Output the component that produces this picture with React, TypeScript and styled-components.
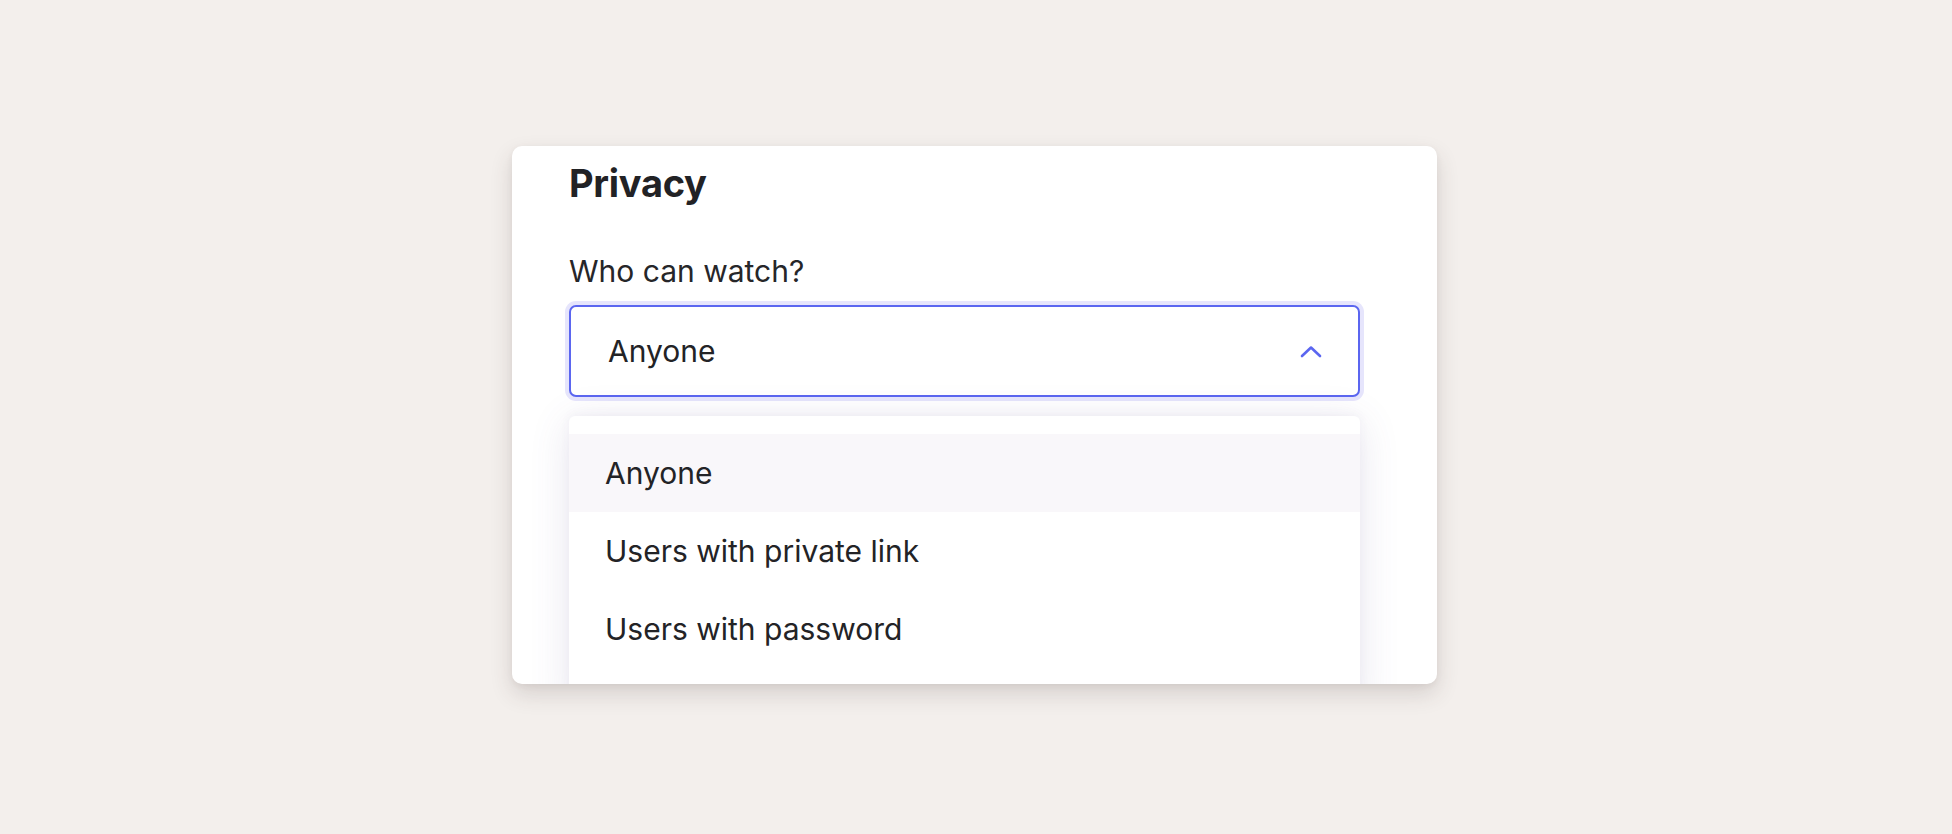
import React from "react";
import styled, { createGlobalStyle } from "styled-components";

const Global = createGlobalStyle`
  html, body { margin: 0; padding: 0; }
  body {
    background: #f3efec;
    font-family: Inter, Roboto, "Liberation Sans", sans-serif;
    color: #232326;
  }
`;

const Page = styled.div`
  box-sizing: border-box;
  width: 100vw;
  height: 100vh;
  padding: 0 3px 4px 0;
  display: flex;
  align-items: center;
  justify-content: center;
`;

const Card = styled.div`
  box-sizing: border-box;
  width: 925px;
  height: 538px;
  background: #ffffff;
  border-radius: 10px;
  box-shadow: 0 10px 22px rgba(70, 50, 50, 0.16), 0 2px 6px rgba(70, 50, 50, 0.06);
  overflow: hidden;
  padding: 13px 77px 0 57px;
  display: flex;
  flex-direction: column;
`;

const Title = styled.h2`
  margin: 0;
  font-size: 38px;
  line-height: 48px;
  font-weight: 700;
  letter-spacing: -0.3px;
  color: #222225;
`;

const Label = styled.label`
  margin-top: 46px;
  font-size: 30px;
  line-height: 36px;
  font-weight: 400;
  color: #262629;
`;

const SelectWrap = styled.div`
  position: relative;
  margin-top: 16px;
`;

const Trigger = styled.div`
  box-sizing: border-box;
  height: 92px;
  border: 2px solid #5b66f0;
  border-radius: 7px;
  box-shadow: 0 0 0 4px #e6e5fc;
  background: #ffffff;
  display: flex;
  align-items: center;
  justify-content: space-between;
  padding: 0 36px 0 37px;
  font-size: 30px;
  color: #232326;
`;

const Menu = styled.ul`
  position: absolute;
  left: 0;
  right: 0;
  top: calc(100% + 19px);
  margin: 0;
  padding: 18px 0 40px;
  list-style: none;
  background: #ffffff;
  border-radius: 6px;
  box-shadow: 0 6px 40px rgba(90, 80, 140, 0.14), 0 -2px 10px rgba(90, 80, 140, 0.05);
`;

const Item = styled.li<{ $active?: boolean }>`
  height: 78px;
  display: flex;
  align-items: center;
  padding: 0 36px;
  font-size: 30px;
  color: #232326;
  background: ${(p) => (p.$active ? "#f9f7fa" : "transparent")};
`;

const Chevron = () => (
  <svg width="22" height="13" viewBox="0 0 22 13" fill="none">
    <path
      d="M2 11 L11 2.5 L20 11"
      stroke="#5b66f0"
      strokeWidth="2.6"
      strokeLinecap="round"
      strokeLinejoin="round"
    />
  </svg>
);

export default function App() {
  const options = ["Anyone", "Users with private link", "Users with password"];
  return (
    <Page>
      <Global />
      <Card>
        <Title>Privacy</Title>
        <Label>Who can watch?</Label>
        <SelectWrap>
          <Trigger>
            <span>Anyone</span>
            <Chevron />
          </Trigger>
          <Menu>
            {options.map((o, i) => (
              <Item key={o} $active={i === 0}>
                {o}
              </Item>
            ))}
          </Menu>
        </SelectWrap>
      </Card>
    </Page>
  );
}
